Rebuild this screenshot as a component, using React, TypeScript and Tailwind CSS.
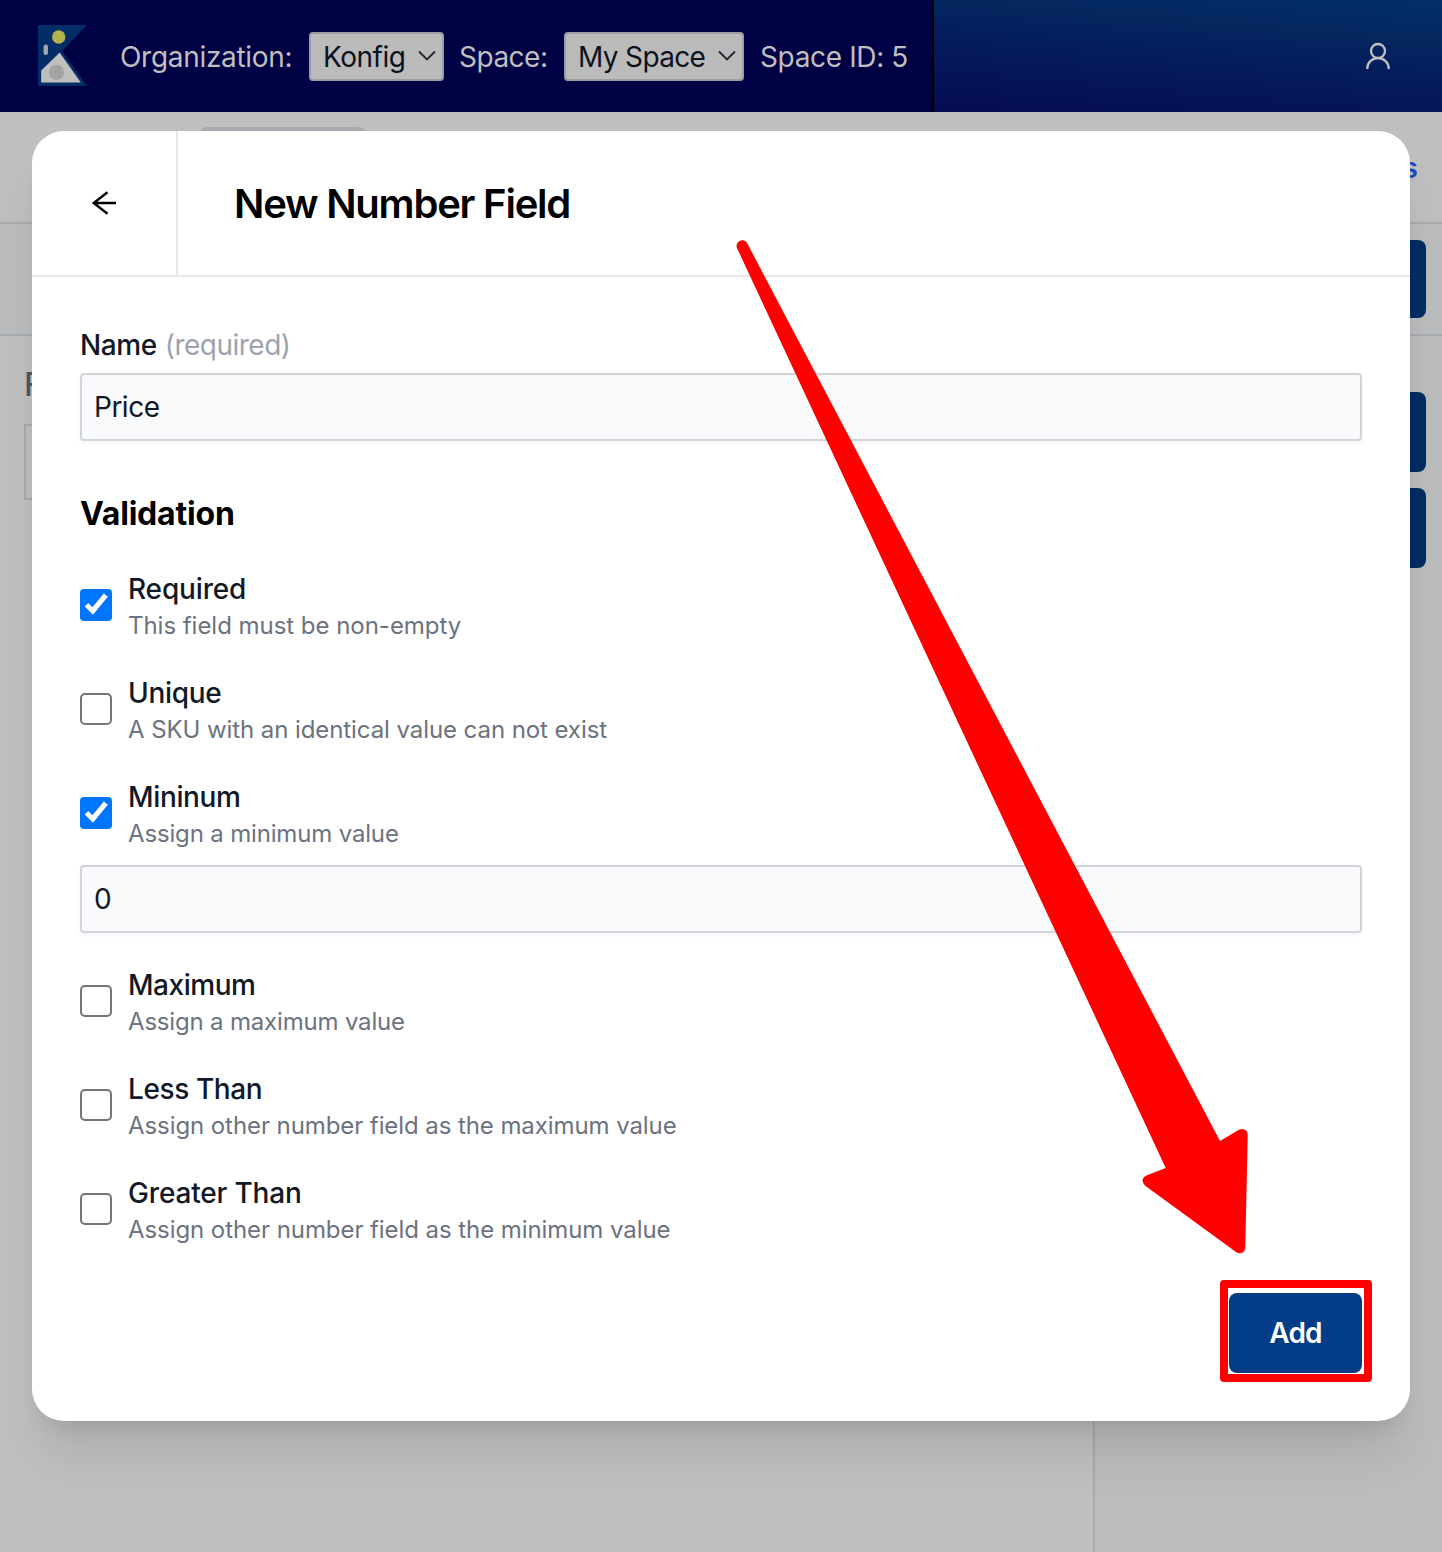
import React from "react";

function Logo() {
  return (
    <svg className="mb-[2px] ml-[38px] h-[61px] w-[49px] shrink-0" viewBox="0 0 49 61">
      <path d="M0 0H49L24 26L49 61H0Z" fill="#032d66" />
      <circle cx="20.7" cy="12" r="6.7" fill="#b4b050" />
      <rect x="5.5" y="19.5" width="4.5" height="10.5" rx="2.2" fill="#a3a6b3" />
      <path d="M21.7 27.5L42.8 57.5H3.2V45.5Z" fill="#bfbfbf" />
      <circle cx="18.5" cy="47.4" r="7.6" fill="#a3a3a3" />
    </svg>
  );
}

function HeaderSelect({ label, className }: { label: string; className: string }) {
  return (
    <div className={`flex h-[49px] shrink-0 items-center justify-between rounded-[4px] border-2 border-[#9a9da3] bg-[#bbbbbb] pl-3 pr-[6px] pt-[2px] text-[#0d131e] ${className}`}>
      <span className="whitespace-nowrap">{label}</span>
      <svg className="mt-[-2px] h-[12px] w-[18px] shrink-0" viewBox="0 0 18 12" fill="none" stroke="#1f2430" strokeWidth="1.8">
        <path d="M1 1.5L9 9.5L17 1.5" />
      </svg>
    </div>
  );
}

function Checkbox({ checked }: { checked?: boolean }) {
  if (!checked) return <div className="size-8 shrink-0 rounded-[5px] border-2 border-[#767676] bg-white" />;
  return (
    <div className="size-8 shrink-0 rounded-[4px] bg-[#0075ff]">
      <svg className="size-8" viewBox="0 0 32 32" fill="#fff">
        <path d="M4.7 17.5L8.2 14.1L12.4 18.2L23.8 4.6L27.8 7.8L13 25.8Z" />
      </svg>
    </div>
  );
}

type OptionProps = {
  title: string;
  detail: string;
  checked?: boolean;
  titleTracking: string;
  detailTracking: string;
};

function Option({ title, detail, checked, titleTracking, detailTracking }: OptionProps) {
  return (
    <div className="flex h-[72px] items-center gap-4">
      <Checkbox checked={checked} />
      <div className="whitespace-nowrap">
        <div className={`text-[28px] font-medium leading-10 text-[#111827] ${titleTracking}`}>{title}</div>
        <div className={`-mb-px pt-px text-2xl leading-8 text-[#6b7280] ${detailTracking}`}>{detail}</div>
      </div>
    </div>
  );
}

function TextField({ value }: { value: string }) {
  return (
    <div className="flex h-[68px] w-[1282px] items-center rounded-[4px] border-2 border-[#d1d5db] bg-[#f9fafb] px-3 text-[28px] tracking-[-0.5px] text-[#111827] shadow-[0_2px_4px_rgba(0,0,0,0.05)]">
      {value}
    </div>
  );
}

function Backdrop() {
  return (
    <div className="flex h-[1552px] flex-col">
      <header className="flex h-28 shrink-0 bg-[#000044] text-[28px] text-[#bfbfbf]">
        <div className="flex w-[934px] items-center border-r-2 border-black">
          <Logo />
          <span className="ml-[33px] w-[189px] shrink-0 whitespace-nowrap pt-px tracking-[-0.3px]">Organization:</span>
          <HeaderSelect label="Konfig" className="w-[135px] tracking-[-0.5px]" />
          <span className="ml-[15px] w-[105px] shrink-0 whitespace-nowrap pt-px tracking-[-0.5px]">Space:</span>
          <HeaderSelect label="My Space" className="w-[180px] tracking-[-0.65px]" />
          <span className="ml-4 whitespace-nowrap pt-px tracking-[-0.36px]">Space ID: 5</span>
        </div>
        <div className="flex flex-1 items-center justify-end bg-[linear-gradient(5deg,#050c4f_0%,#05195b_40%,#05265f_72%,#022f69_100%)] pr-[50px]">
          <svg className="h-8 w-7" viewBox="0 0 28 32" fill="none" stroke="#bfbfbf" strokeWidth="2.3">
            <circle cx="14" cy="11" r="7" />
            <path d="M3.2 29C3.2 22.5 8 18.2 14 18.2S24.8 22.5 24.8 29" />
          </svg>
        </div>
      </header>
      <div className="flex h-28 shrink-0 justify-between border-b-2 border-[#a7aaae] bg-[#bfbfbf]">
        <div className="ml-[199px] mt-[15px] h-20 w-[167px] rounded-[8px] bg-[#a7abaf]" />
        <span className="mr-[24px] mt-[36px] text-[28px] font-semibold leading-10 text-[#1d4bb5]">s</span>
      </div>
      <div className="flex h-28 shrink-0 justify-end border-b-2 border-[#a7aaae] bg-[#bbbcbd] pr-4 pt-4">
        <div className="h-[78px] w-40 rounded-[8px] bg-[#032d64]" />
      </div>
      <div className="flex flex-1">
        <div className="w-[1095px] border-r-2 border-[#a7aaae] bg-[#bfbfbf] pl-6 pt-[29px]">
          <div className="text-[32px] font-medium leading-10 text-[#50555f]">F</div>
          <div className="mt-[19px] h-[76px] w-[900px] border-2 border-[#a7aaae]" />
        </div>
        <div className="flex flex-1 flex-col gap-4 bg-[#bbbcbd] pr-4 pt-14">
          <div className="h-20 w-full rounded-[8px] bg-[#032d64]" />
          <div className="h-20 w-full rounded-[8px] bg-[#032d64]" />
        </div>
      </div>
    </div>
  );
}

function Modal() {
  return (
    <div className="absolute left-8 top-[131px] flex h-[1290px] w-[1378px] flex-col rounded-[32px] bg-white shadow-[0_40px_50px_-10px_rgba(0,0,0,0.1),0_16px_20px_-12px_rgba(0,0,0,0.1)]">
      <div className="flex h-[146px] shrink-0 border-b-2 border-[#e5e7eb]">
        <div className="flex w-[146px] items-center justify-center border-r-2 border-[#e5e7eb]">
          <svg className="size-7" viewBox="0 0 28 28" fill="none" stroke="#000" strokeWidth="2.4">
            <path d="M26 14H3.5M17.5 3.3L3.7 14L17.5 24.7" />
          </svg>
        </div>
        <h1 className="ml-14 flex items-center whitespace-nowrap pt-0.5 text-[40px] font-semibold tracking-[-1.22px] text-black">New Number Field</h1>
      </div>
      <div className="px-12 pt-12">
        <div className="whitespace-nowrap text-[28px] leading-10">
          <span className="font-medium tracking-[-0.4px] text-[#111827]">Name</span> <span className="tracking-[-0.5px] text-[#9ca3af]">(required)</span>
        </div>
        <div className="mt-2">
          <TextField value="Price" />
        </div>
        <h2 className="mb-[35px] mt-[53px] whitespace-nowrap text-[32px] font-bold leading-10 tracking-[-0.2px] text-black">Validation</h2>
        <div className="flex flex-col gap-8">
          <Option checked title="Required" detail="This field must be non-empty" titleTracking="tracking-[-0.15px]" detailTracking="tracking-[-0.03px]" />
          <Option title="Unique" detail="A SKU with an identical value can not exist" titleTracking="tracking-[-0.3px]" detailTracking="tracking-[-0.08px]" />
          <div className="flex flex-col gap-4">
            <Option checked title="Mininum" detail="Assign a minimum value" titleTracking="tracking-[-0.35px]" detailTracking="tracking-[-0.16px]" />
            <TextField value="0" />
          </div>
          <Option title="Maximum" detail="Assign a maximum value" titleTracking="tracking-[-0.45px]" detailTracking="tracking-[-0.18px]" />
          <Option title="Less Than" detail="Assign other number field as the maximum value" titleTracking="tracking-[-0.4px]" detailTracking="tracking-[-0.08px]" />
          <Option title="Greater Than" detail="Assign other number field as the minimum value" titleTracking="tracking-[-0.17px]" detailTracking="tracking-[-0.07px]" />
        </div>
        <div className="mt-12 flex justify-end">
          <button className="relative h-20 w-[133px] rounded-[8px] bg-[#033d88] text-[28px] font-semibold tracking-[-0.8px] text-white">
            Add
            <span className="absolute -left-[9px] -top-[13px] h-[102px] w-[152px] rounded-[4px] border-8 border-[#ff0000]" />
          </button>
        </div>
      </div>
    </div>
  );
}

export default function App() {
  return (
    <div className="relative h-[1552px] w-[1442px] overflow-hidden font-['Inter',sans-serif]">
      <Backdrop />
      <Modal />
      <svg className="pointer-events-none absolute left-0 top-0 h-[1552px] w-[1442px]" viewBox="0 0 1442 1552" fill="#ff0000">
        <path d="M737.2 248.5A5.6 5.6 0 0 1 747.2 243.3L1220 1141L1238.5 1130Q1242 1128 1245 1129.8Q1247.8 1131.5 1247.7 1136L1245.3 1247Q1245.3 1251 1242.3 1252.8Q1239 1254 1236 1252L1145.5 1186Q1142 1183 1142.6 1179.5Q1143.4 1176.8 1147 1175.3L1165.7 1168Z" />
      </svg>
    </div>
  );
}
